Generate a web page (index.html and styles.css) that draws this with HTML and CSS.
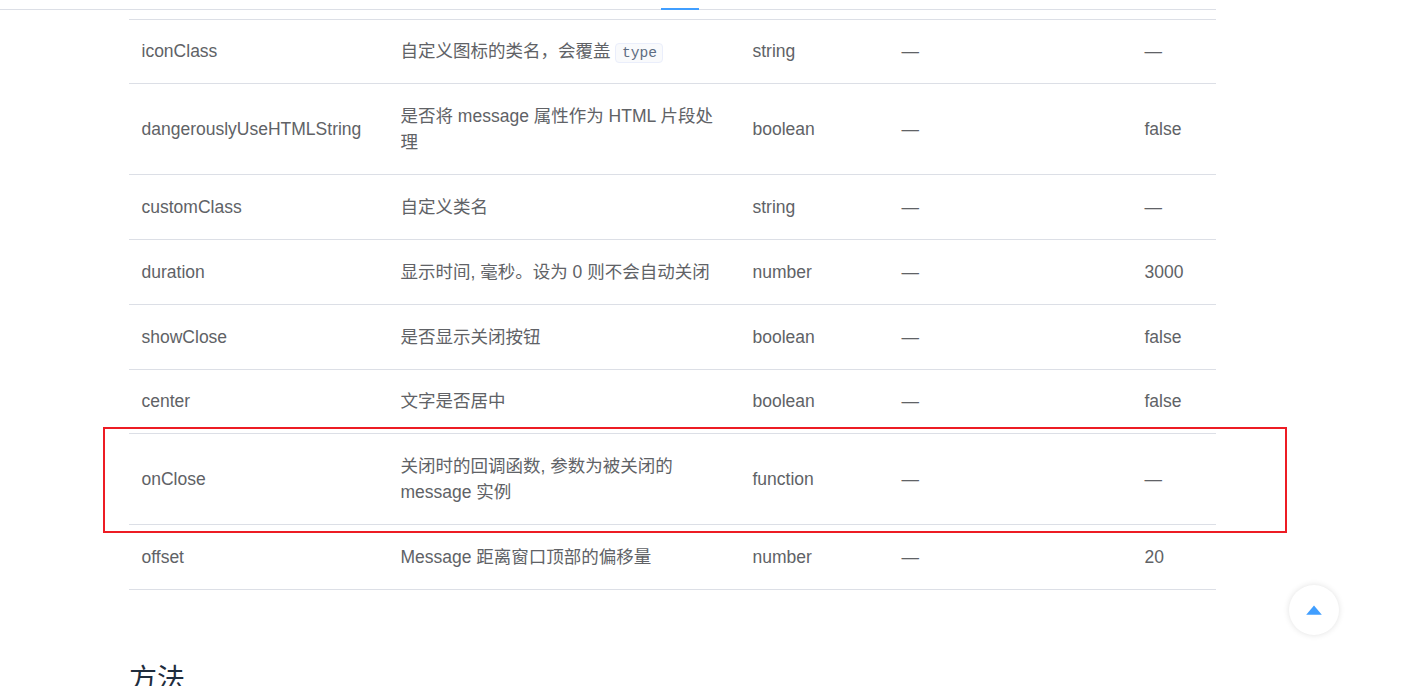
FILE: index.html
```html
<!DOCTYPE html>
<html lang="zh">
<head>
<meta charset="utf-8">
<title>Message</title>
<link rel="stylesheet" href="styles.css">
</head>
<body>
<div class="tabbar"><span class="tab-active"></span></div>
<main class="content">
  <table class="attrs">
    <colgroup>
      <col class="c1"><col class="c2"><col class="c3"><col class="c4"><col class="c5">
    </colgroup>
    <tbody>
      <tr><td>iconClass</td><td>自定义图标的类名，会覆盖 <code>type</code></td><td>string</td><td>—</td><td>—</td></tr>
      <tr><td>dangerouslyUseHTMLString</td><td>是否将 message 属性作为 HTML 片段处理</td><td>boolean</td><td>—</td><td>false</td></tr>
      <tr><td>customClass</td><td>自定义类名</td><td>string</td><td>—</td><td>—</td></tr>
      <tr><td>duration</td><td>显示时间, 毫秒。设为 0 则不会自动关闭</td><td>number</td><td>—</td><td>3000</td></tr>
      <tr><td>showClose</td><td>是否显示关闭按钮</td><td>boolean</td><td>—</td><td>false</td></tr>
      <tr><td>center</td><td>文字是否居中</td><td>boolean</td><td>—</td><td>false</td></tr>
      <tr><td>onClose</td><td>关闭时的回调函数, 参数为被关闭的 message 实例</td><td>function</td><td>—</td><td>—</td></tr>
      <tr><td>offset</td><td>Message 距离窗口顶部的偏移量</td><td>number</td><td>—</td><td>20</td></tr>
    </tbody>
  </table>
  <h3 class="section">方法</h3>
</main>
<div class="highlight"></div>
<button class="backtop" aria-label="回到顶部">
  <svg width="16" height="10" viewBox="0 0 16 10"><path d="M8 0.5 L15.8 9.8 H0.2 Z" fill="#409eff"/></svg>
</button>
</body>
</html>
```
FILE: styles.css
```css
html, body { margin: 0; padding: 0; height: 686px; overflow: hidden; background: #fff; }
body { font-family: "Liberation Sans", "Noto Sans CJK SC", sans-serif; color: #5e6d82; position: relative; }
.tabbar { height: 9px; width: 1216px; border-bottom: 1px solid #dcdfe6; position: relative; }
.tab-active { position: absolute; left: 661px; top: 8px; width: 38px; height: 2px; background: #409eff; }
.content { margin-left: 129px; width: 1087px; padding-top: 8.6px; }
.attrs { width: 1087px; border-collapse: separate; border-spacing: 0; table-layout: fixed; border-top: 1px solid #dcdfe6; font-size: 17.5px; color: #606266; }
.c1 { width: 259px; } .c2 { width: 352px; } .c3 { width: 149px; } .c4 { width: 243px; } .c5 { width: 84px; }
.attrs td { padding: 18.9px 13px 18.9px 12.5px; line-height: 26px; border-bottom: 1px solid #dcdfe6; vertical-align: middle; }
code { font-family: "Liberation Mono", monospace; font-size: 14.6px; line-height: 18px; color: #5e6d82; background: #f9fafc; border: 1px solid #eaeefb; border-radius: 4px; padding: 0 5.5px; vertical-align: baseline; display: inline-block; }
.section { margin: 75px 0 0; font-size: 28px; font-weight: 400; color: #1f2d3d; line-height: 30px; }
.highlight { position: absolute; left: 103px; top: 427px; width: 1180px; height: 102px; border: 2px solid #ed1c24; }
.backtop { position: absolute; left: 1289px; top: 585px; width: 50px; height: 50px; border: 0; border-radius: 50%; background: #fff; box-shadow: 0 0 6px rgba(0,0,0,.12); display: flex; align-items: center; justify-content: center; padding: 0; }
```
